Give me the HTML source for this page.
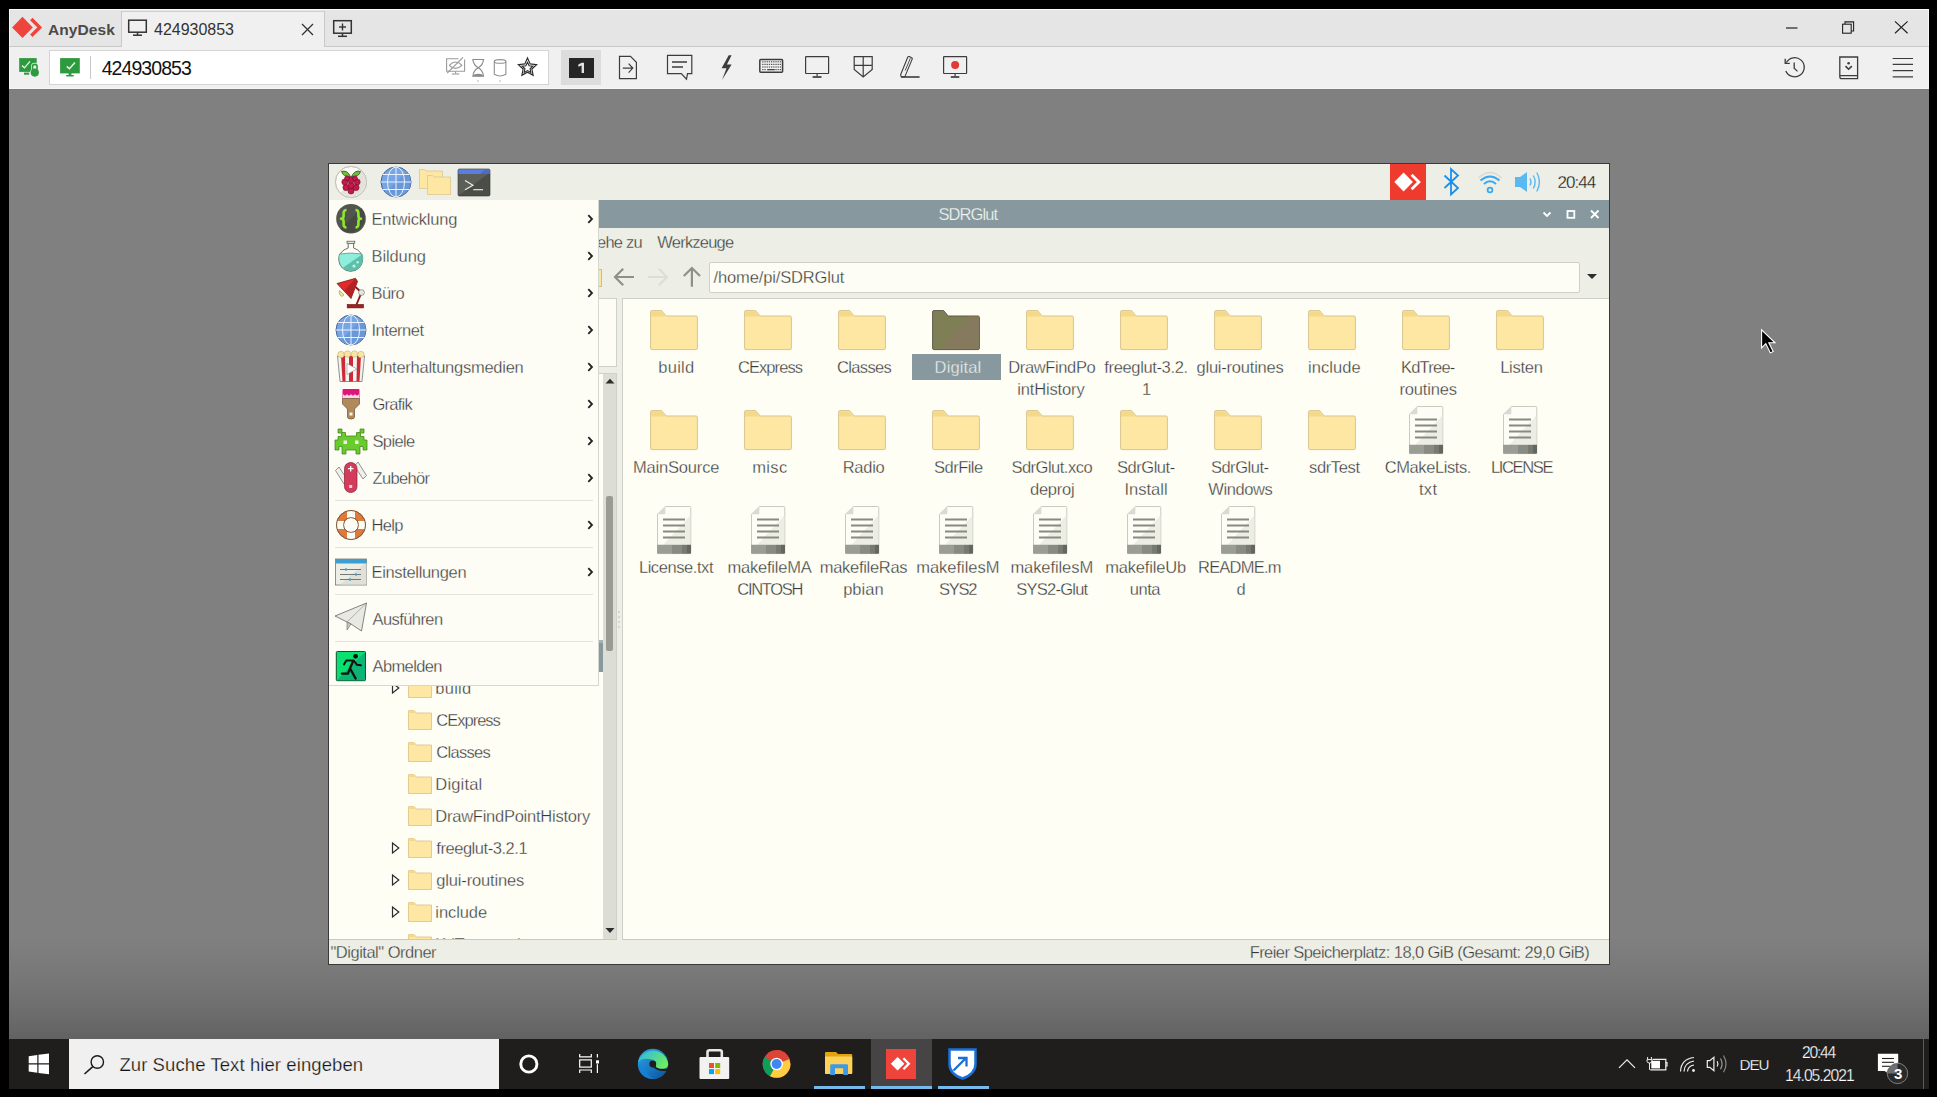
<!DOCTYPE html>
<html><head><meta charset="utf-8">
<style>
*{margin:0;padding:0;box-sizing:border-box}
html,body{width:1937px;height:1097px;overflow:hidden;background:#000;font-family:"Liberation Sans",sans-serif}
.abs{position:absolute}
svg{position:absolute;overflow:visible}
.t{position:absolute;white-space:nowrap;line-height:1}
</style></head><body>

<div class="abs" style="left:9px;top:9px;width:1920px;height:38px;background:#e5e5e5;border-top:1px solid #fafafa"></div>
<div class="abs" style="left:9px;top:9px;width:1px;height:1030px;background:#f4f4f4"></div>
<div class="abs" style="left:1928px;top:9px;width:1px;height:80px;background:#f4f4f4"></div>
<div class="abs" style="left:9px;top:46px;width:1920px;height:1px;background:#c9c9c9"></div>
<div class="abs" style="left:121px;top:11px;width:1px;height:36px;background:#c9c9c9"></div>
<div class="abs" style="left:122px;top:11px;width:203px;height:37px;background:#f0f0f0;border-top:1px solid #cfcfcf;border-right:1px solid #c9c9c9"></div>
<div class="abs" style="left:10px;top:47px;width:1918px;height:42px;background:#f0f0f0;border-bottom:1px solid #f6f6f6"></div>
<div class="abs" style="left:122px;top:46px;width:202px;height:2px;background:#f0f0f0"></div>
<svg style="left:0;top:0" width="60" height="50"><polygon points="22.5,16.8 32.8,27.4 22.5,38 12.1,27.4" fill="#ef443b"/><polyline points="31.3,19 39.7,27.4 31.3,35.8" fill="none" stroke="#ef443b" stroke-width="3.4" stroke-linecap="butt" stroke-linejoin="miter"/></svg>
<div class="t" style="left:48.00px;top:22.00px;font-size:15.5px;font-weight:bold;letter-spacing:0.089px;color:#4a4a4a;">AnyDesk</div>
<svg style="left:0;top:0" width="400" height="50"><rect x="128.7" y="20.2" width="17.6" height="12" fill="none" stroke="#333" stroke-width="1.5"/><line x1="137.5" y1="32" x2="137.5" y2="35" stroke="#333" stroke-width="1.5"/><line x1="133" y1="35.2" x2="142" y2="35.2" stroke="#333" stroke-width="1.5"/><path d="M302 24 L313 35 M313 24 L302 35" stroke="#333" stroke-width="1.3"/><rect x="333.7" y="20.7" width="17.6" height="12.5" fill="none" stroke="#333" stroke-width="1.5"/><line x1="342.5" y1="23.5" x2="342.5" y2="30.5" stroke="#333" stroke-width="1.4"/><line x1="339" y1="27" x2="346" y2="27" stroke="#333" stroke-width="1.4"/><line x1="342.5" y1="33" x2="342.5" y2="36" stroke="#333" stroke-width="1.5"/><line x1="338" y1="36.3" x2="347" y2="36.3" stroke="#333" stroke-width="1.5"/></svg>
<div class="t" style="left:154.00px;top:22.00px;font-size:16px;font-weight:normal;letter-spacing:-0.023px;color:#333;">424930853</div>
<svg style="left:0;top:0" width="1937" height="50"><line x1="1786" y1="28" x2="1797.5" y2="28" stroke="#222" stroke-width="1.2"/><rect x="1842.6" y="24.2" width="8.6" height="9" fill="none" stroke="#222" stroke-width="1.1"/><path d="M1845 24 V21.9 H1853.6 V31 H1851.3" fill="none" stroke="#222" stroke-width="1.1"/><path d="M1895 21.4 L1907.6 33.2 M1907.6 21.4 L1895 33.2" stroke="#222" stroke-width="1.2"/></svg>
<div class="abs" style="left:49px;top:50px;width:500px;height:35px;background:#fff;border:1px solid #d4d4d4"></div>
<div class="abs" style="left:90px;top:56px;width:1px;height:23px;background:#c8c8c8"></div>
<div class="t" style="left:101.70px;top:59.00px;font-size:19.5px;font-weight:normal;letter-spacing:-0.932px;color:#111;">424930853</div>
<svg style="left:0;top:0" width="600" height="90"><rect x="19.2" y="58.1" width="17.5" height="13.8" fill="#2e9a3e"/><rect x="24" y="72.6" width="5.2" height="2.1" fill="#2e9a3e"/><path d="M22 65.6 L24.4 67.8 L30 61.3" fill="none" stroke="#e8f4e8" stroke-width="1.3"/><g fill="#f0f0f0" stroke="#f0f0f0" stroke-width="1.4"><path d="M31.7 69.5 V66.6 A3.1 3.1 0 0 1 37.9 66.6 V69.5 Z"/><circle cx="34.8" cy="72.6" r="4.1"/></g><path d="M32.5 69.5 V66.7 A2.3 2.3 0 0 1 37.1 66.7 V69.5" fill="none" stroke="#2e9a3e" stroke-width="1.6"/><circle cx="34.8" cy="72.6" r="4.1" fill="#2e9a3e"/><rect x="60.1" y="58.1" width="19.7" height="15.3" fill="#2e9a3e"/><rect x="66" y="75" width="7.9" height="1.4" rx="0.7" fill="#2e9a3e"/><rect x="68.6" y="73" width="2.8" height="2.2" fill="#2e9a3e"/><path d="M66.8 66.4 L69.4 68.7 L75 62.4" fill="none" stroke="#e8f4e8" stroke-width="1.5"/></svg>
<svg style="left:0;top:0" width="600" height="90"><g fill="none" stroke="#9a9a9a" stroke-width="1.1"><path d="M458.5 58.7 H446.6 V71.2 H464.6 V59.6"/><line x1="455.6" y1="71.5" x2="455.6" y2="73.4"/><line x1="452" y1="74" x2="459.3" y2="74"/><path d="M449.2 65.3 Q455.6 58.8 461.9 65.3 Q455.6 71.5 449.2 65.3"/><line x1="447.2" y1="73.2" x2="463" y2="57.4" stroke-width="1.2"/></g><g fill="none" stroke="#8a8a8a" stroke-width="1.1"><path d="M472.3 59.5 H484.1 M472.3 76.3 H484.1 M472.8 59.6 Q473.5 65 478.2 67.8 Q483 65 483.5 59.6 M472.8 76.2 Q473.5 70.5 478.2 67.8 Q483 70.5 483.5 76.2"/></g><path d="M472.8 76.2 Q474 73.8 478.2 73.8 Q482.4 73.8 483.5 76.2Z" fill="#8a8a8a"/><g fill="none" stroke="#8f8f8f" stroke-width="1.1"><ellipse cx="500.1" cy="61.4" rx="5.8" ry="1.8"/><path d="M494.3 61.4 V74.3 Q500.1 77.6 505.9 74.3 V61.4"/></g><circle cx="478" cy="81" r="0.9" fill="#b7cdf0"/><circle cx="500" cy="81" r="0.9" fill="#b7cdf0"/><polygon points="527.50,58.00 530.20,63.88 536.63,64.63 531.87,69.02 533.14,75.37 527.50,72.20 521.86,75.37 523.13,69.02 518.37,64.63 524.80,63.88" fill="none" stroke="#2a2a2a" stroke-width="1.15" stroke-linejoin="miter"/><polygon points="527.50,62.30 529.09,65.72 532.83,66.17 530.07,68.73 530.79,72.43 527.50,70.60 524.21,72.43 524.93,68.73 522.17,66.17 525.91,65.72" fill="none" stroke="#2a2a2a" stroke-width="1.1"/></svg>
<div class="abs" style="left:561px;top:50px;width:40px;height:35px;background:#dcdcdc"></div>
<div class="abs" style="left:569px;top:57.5px;width:25px;height:20px;background:#262626"></div>
<svg style="left:0;top:0" width="700" height="90"><path d="M581.6 62.7 H584 V73 H581.6 V65.6 L578.3 66.8 V64.6 Z" fill="#e2e2e2"/></svg>
<svg style="left:0;top:0" width="1937" height="90"><g fill="none" stroke="#3c3c3c" stroke-width="1.2"><path d="M619.5 56.3 H630.5 L636.4 62.3 V78.6 H619.5 Z"/><path d="M622.8 68.1 H632.6 M628.6 63.6 L632.8 68.1 L628.6 72.6"/><path d="M667.5 55.4 H691.8 V73.6 H687.5 L686.5 79.2 L681.3 73.6 H667.5 Z"/><path d="M672 62 H687 M672 67 H683" stroke-width="1.5"/><rect x="759.8" y="59.5" width="22.8" height="12.8" rx="1" stroke-width="1.5"/><rect x="805.6" y="56.6" width="23" height="16.9" rx="0.5"/><path d="M817.1 73.5 V76.3"/><path d="M812.6 77 H821.5" stroke-width="1.7"/><path d="M854.2 56.7 H872.2 V69.4 L863.2 76.9 L854.2 69.4 Z M863.2 56.7 V76.9 M854.2 65.4 H872.2"/><path d="M900.6 74.8 L907.7 57.2 Q908.2 56.2 909.2 56.6 L911.7 57.7 Q912.6 58.1 912.2 59.1 L904.9 76.6 L901.3 77 Z" stroke-width="1.1"/><path d="M905.2 70.5 L910.4 58.2" stroke-width="0.9"/><path d="M901.2 77 H919.6" stroke-width="1.6"/><rect x="943.6" y="56.6" width="23" height="16.9" rx="0.5"/><path d="M955.1 73.5 V76.3"/><path d="M950.8 77 H959.3" stroke-width="1.7"/></g><path d="M728.7 55.2 L721.6 68.3 L726.5 68.3 L722 79.9 L731.6 64.5 L726.9 64.5 L731.6 55.2 Z" fill="#3c3c3c"/><circle cx="955.1" cy="65" r="4" fill="#e23a35"/></svg>
<svg style="left:0;top:0" width="1937" height="90"><rect x="762.2" y="61.2" width="1.3" height="1.2" fill="#555"/><rect x="764.4" y="61.2" width="1.3" height="1.2" fill="#555"/><rect x="766.6" y="61.2" width="1.3" height="1.2" fill="#555"/><rect x="768.8" y="61.2" width="1.3" height="1.2" fill="#555"/><rect x="771.0" y="61.2" width="1.3" height="1.2" fill="#555"/><rect x="773.2" y="61.2" width="1.3" height="1.2" fill="#555"/><rect x="775.4" y="61.2" width="1.3" height="1.2" fill="#555"/><rect x="777.6" y="61.2" width="1.3" height="1.2" fill="#555"/><rect x="779.8" y="61.2" width="1.3" height="1.2" fill="#555"/><rect x="762.2" y="63.8" width="1.3" height="1.2" fill="#555"/><rect x="764.4" y="63.8" width="1.3" height="1.2" fill="#555"/><rect x="766.6" y="63.8" width="1.3" height="1.2" fill="#555"/><rect x="768.8" y="63.8" width="1.3" height="1.2" fill="#555"/><rect x="771.0" y="63.8" width="1.3" height="1.2" fill="#555"/><rect x="773.2" y="63.8" width="1.3" height="1.2" fill="#555"/><rect x="775.4" y="63.8" width="1.3" height="1.2" fill="#555"/><rect x="777.6" y="63.8" width="1.3" height="1.2" fill="#555"/><rect x="779.8" y="63.8" width="1.3" height="1.2" fill="#555"/><rect x="762.2" y="66.4" width="1.3" height="1.2" fill="#555"/><rect x="764.4" y="66.4" width="1.3" height="1.2" fill="#555"/><rect x="766.6" y="66.4" width="1.3" height="1.2" fill="#555"/><rect x="768.8" y="66.4" width="1.3" height="1.2" fill="#555"/><rect x="771.0" y="66.4" width="1.3" height="1.2" fill="#555"/><rect x="773.2" y="66.4" width="1.3" height="1.2" fill="#555"/><rect x="775.4" y="66.4" width="1.3" height="1.2" fill="#555"/><rect x="777.6" y="66.4" width="1.3" height="1.2" fill="#555"/><rect x="779.8" y="66.4" width="1.3" height="1.2" fill="#555"/><rect x="762.2" y="69.0" width="1.3" height="1.2" fill="#555"/><rect x="764.4" y="69.0" width="1.3" height="1.2" fill="#555"/><rect x="775.4" y="69.0" width="1.3" height="1.2" fill="#555"/><rect x="777.6" y="69.0" width="1.3" height="1.2" fill="#555"/><rect x="779.8" y="69.0" width="1.3" height="1.2" fill="#555"/><rect x="767.2" y="69" width="7.6" height="1.3" fill="#444"/></svg>
<svg style="left:0;top:0" width="1937" height="90"><g fill="none" stroke="#3c3c3c" stroke-width="1.3"><path d="M1786.3 62.5 A9.6 9.6 0 1 1 1785.8 71"/><path d="M1785.2 58.8 V63.4 H1789.8" /><path d="M1794.2 62.6 V68.2 L1797.5 71.4"/><path d="M1839.8 57 H1857.6 V78.7 H1841.7 Q1839.8 78.7 1839.8 76.8 Z M1839.8 75.6 H1857.6"/><path d="M1845.5 66.1 L1848.6 69.2 L1851.8 66.1" stroke-width="1.6"/><path d="M1892.7 58.5 H1913 M1892.7 64.3 H1913 M1892.7 70.6 H1913 M1892.7 76.8 H1913" stroke-width="1.2"/></g><circle cx="1848.6" cy="63.2" r="1.3" fill="#3c3c3c"/></svg>
<div class="abs" style="left:9px;top:89px;width:1920px;height:950px;background:linear-gradient(to bottom,#787878 0px,#808080 1px,#808080 848px,#777 890px,#6c6c6c 925px,#626262 950px)"></div>
<div class="abs" style="left:328px;top:163px;width:1282px;height:802px;background:#3a3a3a"></div>
<div class="abs" style="left:329px;top:164px;width:1280px;height:36px;background:#edeee6"></div>
<svg style="left:0;top:0" width="1937" height="210"><circle cx="351" cy="182" r="15.6" fill="#fbfbf4" stroke="#c9c9c1" stroke-width="1"/><path d="M362 171 A15.6 15.6 0 0 1 340 193 Z" fill="#e3e3da"/><circle cx="351" cy="182" r="15.6" fill="none" stroke="#c4c4bc" stroke-width="0.9"/><path d="M350.5 176.5 Q347 169.5 341.5 171.5 Q343 177 350.5 176.5Z M351.5 176.5 Q355 169.5 360.5 171.5 Q359 177 351.5 176.5Z" fill="#6cbf3a" stroke="#1f3d14" stroke-width="0.7"/><g fill="#c8174a" stroke="#6a0c26" stroke-width="0.6"><circle cx="351" cy="191" r="3"/><circle cx="346" cy="187.5" r="3.1"/><circle cx="356" cy="187.5" r="3.1"/><circle cx="351" cy="185.5" r="3.1"/><circle cx="344.8" cy="182" r="3"/><circle cx="357.2" cy="182" r="3"/><circle cx="351" cy="180" r="3.2"/><circle cx="347" cy="178.3" r="2.4"/><circle cx="355" cy="178.3" r="2.4"/></g><circle cx="396" cy="182" r="15" fill="#78a6e4" stroke="#3c5a90" stroke-width="0.9"/><path d="M385.4 192.6 A15 15 0 0 0 406.6 171.4 Z" fill="#6a97d6"/><g fill="none" stroke="#eaf2ff" stroke-width="1"><line x1="396" y1="167" x2="396" y2="197"/><line x1="381" y1="182" x2="411" y2="182"/><line x1="383" y1="174.5" x2="409" y2="174.5"/><line x1="383" y1="189.5" x2="409" y2="189.5"/><ellipse cx="396" cy="182" rx="8.5" ry="15"/></g><path d="M419.5 169.5 H424.5 L426 171 H442.5 V188.5 H419.5 Z" fill="#fde7a2" stroke="#dcc68e" stroke-width="0.8"/><path d="M427.5 175.5 H432.5 L434 177 H450.5 V194.5 H427.5 Z" fill="#fde7a2" stroke="#dcc68e" stroke-width="0.8"/><rect x="458" y="169" width="32" height="27" rx="1.5" fill="#4b4d48" stroke="#2e302c" stroke-width="0.6"/><path d="M458.3 195.7 L488 174 H458.3 Z" fill="#5c5e58"/><path d="M458.3 174 H489.7 V170.5 Q489.7 169.3 488.5 169.3 H459.5 Q458.3 169.3 458.3 170.5 Z" fill="#5a7ee0"/><path d="M485 169.3 L480 174 H489.7 V170.5 Q489.7 169.3 488.5 169.3Z" fill="#4a6cc8"/><path d="M465 180.5 L473 185.2 L465 189.8" fill="none" stroke="#f0f0ea" stroke-width="1.1"/><line x1="473.3" y1="189.7" x2="483" y2="189.7" stroke="#f0f0ea" stroke-width="1.1"/></svg>
<div class="abs" style="left:1390px;top:164px;width:36px;height:36px;background:#ef3b2d"></div>
<svg style="left:0;top:0" width="1937" height="210"><polygon points="1403.6,172.6 1412.9,182 1403.6,191.4 1394.3,182" fill="#fff"/><polyline points="1411.6,174.8 1418.9,182 1411.6,189.2" fill="none" stroke="#fff" stroke-width="2.8"/><path d="M1444.5 175.5 L1458 188 L1451 194.5 V169 L1458 175.5 L1444.5 188" fill="none" stroke="#1a8fea" stroke-width="1.8"/><path d="M1478.5 178 Q1490 167 1501.5 178" fill="none" stroke="#d8d8d0" stroke-width="1.2"/><path d="M1480.5 180.5 Q1490 172.5 1499.5 180.5" fill="none" stroke="#3aa8f0" stroke-width="2"/><path d="M1484 184 Q1490 178.5 1496 184" fill="none" stroke="#3aa8f0" stroke-width="2"/><circle cx="1490" cy="190" r="2.4" fill="none" stroke="#3aa8f0" stroke-width="1.8"/><path d="M1515 177 H1520 L1527 172 V192 L1520 187 H1515 Z" fill="#5ab9f2"/><g fill="none" stroke="#5ab9f2" stroke-width="1.4"><path d="M1530 178.5 Q1532 182 1530 185.5"/><path d="M1533.3 175.5 Q1537 182 1533.3 188.5"/><path d="M1536.8 172.5 Q1542 182 1536.8 191.5"/></g></svg>
<div class="t" style="left:1557.50px;top:174.00px;font-size:17px;font-weight:normal;letter-spacing:-0.947px;color:#111;-webkit-text-stroke:0.3px #edeee6;">20:44</div>
<div class="abs" style="left:329px;top:200px;width:1280px;height:764px;background:#edefe6"></div>
<div class="abs" style="left:329px;top:200px;width:1280px;height:28px;background:#87999f"></div>
<div class="t" style="left:938.50px;top:206.00px;font-size:16.5px;font-weight:normal;letter-spacing:-0.919px;color:#f4f6f2;-webkit-text-stroke:0.25px #87999f;">SDRGlut</div>
<svg style="left:0;top:0" width="1937" height="230"><path d="M1543.5 212.5 L1547 216 L1550.5 212.5" fill="none" stroke="#fff" stroke-width="1.8"/><rect x="1567.5" y="211" width="6.8" height="6.8" fill="none" stroke="#fff" stroke-width="1.8"/><path d="M1591 210.5 L1598.5 218 M1598.5 210.5 L1591 218" stroke="#fff" stroke-width="1.9"/></svg>
<div class="t" style="left:585.00px;top:234.00px;font-size:16.5px;font-weight:normal;letter-spacing:-0.783px;color:#383838;-webkit-text-stroke:0.3px #edefe6;">Gehe zu</div>
<div class="t" style="left:657.30px;top:234.00px;font-size:16.5px;font-weight:normal;letter-spacing:-0.785px;color:#383838;-webkit-text-stroke:0.3px #edefe6;">Werkzeuge</div>
<svg style="left:0;top:0" width="1937" height="300"><g fill="none" stroke-width="2.2"><path d="M615 277 H634 M623.2 268.8 L615 277 L623.2 285.2" stroke="#8d9189"/><path d="M648 277 H667 M658.8 268.8 L667 277 L658.8 285.2" stroke="#dcdfd6"/><path d="M691.9 268 V286.7 M683.8 276 L691.9 268 L700 276" stroke="#8d9189"/></g><polygon points="1587,274 1597,274 1592,279" fill="#2d2d2d"/></svg>
<div class="abs" style="left:709px;top:261.5px;width:871px;height:31px;background:#fdfdf6;border:1px solid #cfcfc8;border-radius:2px"></div>
<div class="t" style="left:713.60px;top:269.00px;font-size:16.5px;font-weight:normal;letter-spacing:-0.146px;color:#383838;-webkit-text-stroke:0.3px #fdfdf6;">/home/pi/SDRGlut</div>
<div class="abs" style="left:329px;top:298px;width:288px;height:69px;background:#fdfdf6;border:1px solid #cfd1c8"></div>
<div class="abs" style="left:598px;top:269px;width:4px;height:18px;background:#fde59a;border:1px solid #cdbb8f;border-left:none"></div>
<div class="abs" style="left:329px;top:373px;width:288px;height:567px;background:#fefef5;border-top:1px solid #cfd1c8;border-right:1px solid #cfd1c8;border-bottom:1px solid #c8cac1"></div>
<div class="abs" style="left:603px;top:374px;width:13px;height:565px;background:#dcddd5"></div>
<div class="abs" style="left:605.8px;top:495.7px;width:7.1px;height:155.6px;background:#9a9c92;border-radius:2px"></div>
<svg style="left:0;top:0" width="1937" height="960"><polygon points="605.5,383.5 614.5,383.5 610,378.8" fill="#2d2d2d"/><polygon points="605.5,928 614.5,928 610,933" fill="#2d2d2d"/><g fill="#b9bbb3"><circle cx="619" cy="612" r="0.8"/><circle cx="619" cy="617" r="0.8"/><circle cx="619" cy="622" r="0.8"/><circle cx="619" cy="627" r="0.8"/></g></svg>
<div class="abs" style="left:330px;top:374px;width:273px;height:565px;overflow:hidden">
<div class="abs" style="left:0px;top:266px;width:273px;height:32px;background:#87999f;border-top:3px solid #a3b3b8"></div>
<svg style="left:0;top:0" width="300" height="600"><polygon points="62.5,309 68.80000000000001,314 62.5,319" fill="none" stroke="#2d2d2d" stroke-width="1.2"/></svg>
<svg style="left:78px;top:304px" width="24" height="20"><path d="M0.5 0.5 H6 L8.5 3 H23.5 V19.5 H0.5 Z" fill="#fde7a2" stroke="#dcc68e" stroke-width="0.9"/><path d="M0.5 0.5 H6 L8.5 3 H0.5 Z" fill="#f5d98a"/></svg>
<div class="t" style="left:105.30px;top:306.00px;font-size:16.5px;font-weight:normal;letter-spacing:0.254px;color:#383838;-webkit-text-stroke:0.3px #fefef5;">build</div>
<svg style="left:78px;top:336px" width="24" height="20"><path d="M0.5 0.5 H6 L8.5 3 H23.5 V19.5 H0.5 Z" fill="#fde7a2" stroke="#dcc68e" stroke-width="0.9"/><path d="M0.5 0.5 H6 L8.5 3 H0.5 Z" fill="#f5d98a"/></svg>
<div class="t" style="left:106.30px;top:338.00px;font-size:16.5px;font-weight:normal;letter-spacing:-0.996px;color:#383838;-webkit-text-stroke:0.3px #fefef5;">CExpress</div>
<svg style="left:78px;top:368px" width="24" height="20"><path d="M0.5 0.5 H6 L8.5 3 H23.5 V19.5 H0.5 Z" fill="#fde7a2" stroke="#dcc68e" stroke-width="0.9"/><path d="M0.5 0.5 H6 L8.5 3 H0.5 Z" fill="#f5d98a"/></svg>
<div class="t" style="left:106.30px;top:370.00px;font-size:16.5px;font-weight:normal;letter-spacing:-0.706px;color:#383838;-webkit-text-stroke:0.3px #fefef5;">Classes</div>
<svg style="left:78px;top:400px" width="24" height="20"><path d="M0.5 0.5 H6 L8.5 3 H23.5 V19.5 H0.5 Z" fill="#fde7a2" stroke="#dcc68e" stroke-width="0.9"/><path d="M0.5 0.5 H6 L8.5 3 H0.5 Z" fill="#f5d98a"/></svg>
<div class="t" style="left:105.30px;top:402.00px;font-size:16.5px;font-weight:normal;letter-spacing:0.169px;color:#383838;-webkit-text-stroke:0.3px #fefef5;">Digital</div>
<svg style="left:78px;top:432px" width="24" height="20"><path d="M0.5 0.5 H6 L8.5 3 H23.5 V19.5 H0.5 Z" fill="#fde7a2" stroke="#dcc68e" stroke-width="0.9"/><path d="M0.5 0.5 H6 L8.5 3 H0.5 Z" fill="#f5d98a"/></svg>
<div class="t" style="left:105.30px;top:434.00px;font-size:16.5px;font-weight:normal;letter-spacing:-0.247px;color:#383838;-webkit-text-stroke:0.3px #fefef5;">DrawFindPointHistory</div>
<svg style="left:0;top:0" width="300" height="600"><polygon points="62.5,469 68.80000000000001,474 62.5,479" fill="none" stroke="#2d2d2d" stroke-width="1.2"/></svg>
<svg style="left:78px;top:464px" width="24" height="20"><path d="M0.5 0.5 H6 L8.5 3 H23.5 V19.5 H0.5 Z" fill="#fde7a2" stroke="#dcc68e" stroke-width="0.9"/><path d="M0.5 0.5 H6 L8.5 3 H0.5 Z" fill="#f5d98a"/></svg>
<div class="t" style="left:106.30px;top:466.00px;font-size:16.5px;font-weight:normal;letter-spacing:-0.458px;color:#383838;-webkit-text-stroke:0.3px #fefef5;">freeglut-3.2.1</div>
<svg style="left:0;top:0" width="300" height="600"><polygon points="62.5,501 68.80000000000001,506 62.5,511" fill="none" stroke="#2d2d2d" stroke-width="1.2"/></svg>
<svg style="left:78px;top:496px" width="24" height="20"><path d="M0.5 0.5 H6 L8.5 3 H23.5 V19.5 H0.5 Z" fill="#fde7a2" stroke="#dcc68e" stroke-width="0.9"/><path d="M0.5 0.5 H6 L8.5 3 H0.5 Z" fill="#f5d98a"/></svg>
<div class="t" style="left:106.30px;top:498.00px;font-size:16.5px;font-weight:normal;letter-spacing:-0.169px;color:#383838;-webkit-text-stroke:0.3px #fefef5;">glui-routines</div>
<svg style="left:0;top:0" width="300" height="600"><polygon points="62.5,533 68.80000000000001,538 62.5,543" fill="none" stroke="#2d2d2d" stroke-width="1.2"/></svg>
<svg style="left:78px;top:528px" width="24" height="20"><path d="M0.5 0.5 H6 L8.5 3 H23.5 V19.5 H0.5 Z" fill="#fde7a2" stroke="#dcc68e" stroke-width="0.9"/><path d="M0.5 0.5 H6 L8.5 3 H0.5 Z" fill="#f5d98a"/></svg>
<div class="t" style="left:105.30px;top:530.00px;font-size:16.5px;font-weight:normal;letter-spacing:-0.085px;color:#383838;-webkit-text-stroke:0.3px #fefef5;">include</div>
<svg style="left:78px;top:560px" width="24" height="20"><path d="M0.5 0.5 H6 L8.5 3 H23.5 V19.5 H0.5 Z" fill="#fde7a2" stroke="#dcc68e" stroke-width="0.9"/><path d="M0.5 0.5 H6 L8.5 3 H0.5 Z" fill="#f5d98a"/></svg>
<div class="t" style="left:105.30px;top:562.00px;font-size:16.5px;font-weight:normal;letter-spacing:-0.524px;color:#383838;-webkit-text-stroke:0.3px #fefef5;">KdTree-routines</div>
</div>
<div class="abs" style="left:622px;top:298px;width:987px;height:642px;background:#fefef5;border-top:1px solid #cfd1c8;border-left:1px solid #cfd1c8;border-bottom:1px solid #c8cac1"></div>
<svg style="left:650px;top:310px" width="48" height="41"><path d="M0.6 2 Q0.6 0.6 2 0.6 H11.6 L16.2 6 H46 Q47.4 6 47.4 7.4 V38.2 Q47.4 39.6 46 39.6 H2 Q0.6 39.6 0.6 38.2 Z" fill="#fde7a2" stroke="#d9c58f" stroke-width="1"/><path d="M1.2 2 Q1.2 1.2 2 1.2 H11.3 L15.6 6.4 H1.2 Z" fill="#f5d98a"/></svg>
<div class="t" style="left:658.30px;top:359.00px;font-size:16.5px;font-weight:normal;letter-spacing:0.254px;color:#383838;-webkit-text-stroke:0.3px #fefef5;">build</div>
<svg style="left:744px;top:310px" width="48" height="41"><path d="M0.6 2 Q0.6 0.6 2 0.6 H11.6 L16.2 6 H46 Q47.4 6 47.4 7.4 V38.2 Q47.4 39.6 46 39.6 H2 Q0.6 39.6 0.6 38.2 Z" fill="#fde7a2" stroke="#d9c58f" stroke-width="1"/><path d="M1.2 2 Q1.2 1.2 2 1.2 H11.3 L15.6 6.4 H1.2 Z" fill="#f5d98a"/></svg>
<div class="t" style="left:737.90px;top:359.00px;font-size:16.5px;font-weight:normal;letter-spacing:-0.910px;color:#383838;-webkit-text-stroke:0.3px #fefef5;">CExpress</div>
<svg style="left:838px;top:310px" width="48" height="41"><path d="M0.6 2 Q0.6 0.6 2 0.6 H11.6 L16.2 6 H46 Q47.4 6 47.4 7.4 V38.2 Q47.4 39.6 46 39.6 H2 Q0.6 39.6 0.6 38.2 Z" fill="#fde7a2" stroke="#d9c58f" stroke-width="1"/><path d="M1.2 2 Q1.2 1.2 2 1.2 H11.3 L15.6 6.4 H1.2 Z" fill="#f5d98a"/></svg>
<div class="t" style="left:837.00px;top:359.00px;font-size:16.5px;font-weight:normal;letter-spacing:-0.639px;color:#383838;-webkit-text-stroke:0.3px #fefef5;">Classes</div>
<svg style="left:932px;top:310px" width="48" height="41"><path d="M0.6 2 Q0.6 0.6 2 0.6 H11.6 L16.2 6 H46 Q47.4 6 47.4 7.4 V38.2 Q47.4 39.6 46 39.6 H2 Q0.6 39.6 0.6 38.2 Z" fill="#7f7f56" stroke="#5f5b48" stroke-width="1"/><path d="M1.2 2 Q1.2 1.2 2 1.2 H11.3 L15.6 6.4 H1.2 Z" fill="#7f7f56"/><path d="M47 6.5 V38.2 Q47 39.1 46 39.1 H8 L36 6.5Z" fill="#857a5d"/></svg>
<div class="abs" style="left:912px;top:354px;width:89px;height:26px;background:#87999f"></div>
<div class="t" style="left:934.60px;top:359.00px;font-size:16.5px;font-weight:normal;letter-spacing:0.136px;color:#f0f0ea;-webkit-text-stroke:0.3px #87999f;">Digital</div>
<svg style="left:1026px;top:310px" width="48" height="41"><path d="M0.6 2 Q0.6 0.6 2 0.6 H11.6 L16.2 6 H46 Q47.4 6 47.4 7.4 V38.2 Q47.4 39.6 46 39.6 H2 Q0.6 39.6 0.6 38.2 Z" fill="#fde7a2" stroke="#d9c58f" stroke-width="1"/><path d="M1.2 2 Q1.2 1.2 2 1.2 H11.3 L15.6 6.4 H1.2 Z" fill="#f5d98a"/></svg>
<div class="t" style="left:1008.20px;top:359.00px;font-size:16.5px;font-weight:normal;letter-spacing:-0.356px;color:#383838;-webkit-text-stroke:0.3px #fefef5;">DrawFindPo</div>
<div class="t" style="left:1017.20px;top:381.00px;font-size:16.5px;font-weight:normal;letter-spacing:-0.146px;color:#383838;-webkit-text-stroke:0.3px #fefef5;">intHistory</div>
<svg style="left:1120px;top:310px" width="48" height="41"><path d="M0.6 2 Q0.6 0.6 2 0.6 H11.6 L16.2 6 H46 Q47.4 6 47.4 7.4 V38.2 Q47.4 39.6 46 39.6 H2 Q0.6 39.6 0.6 38.2 Z" fill="#fde7a2" stroke="#d9c58f" stroke-width="1"/><path d="M1.2 2 Q1.2 1.2 2 1.2 H11.3 L15.6 6.4 H1.2 Z" fill="#f5d98a"/></svg>
<div class="t" style="left:1104.30px;top:359.00px;font-size:16.5px;font-weight:normal;letter-spacing:-0.356px;color:#383838;-webkit-text-stroke:0.3px #fefef5;">freeglut-3.2.</div>
<div class="t" style="left:1142.00px;top:381.00px;font-size:16.5px;font-weight:normal;letter-spacing:0.000px;color:#383838;-webkit-text-stroke:0.3px #fefef5;">1</div>
<svg style="left:1214px;top:310px" width="48" height="41"><path d="M0.6 2 Q0.6 0.6 2 0.6 H11.6 L16.2 6 H46 Q47.4 6 47.4 7.4 V38.2 Q47.4 39.6 46 39.6 H2 Q0.6 39.6 0.6 38.2 Z" fill="#fde7a2" stroke="#d9c58f" stroke-width="1"/><path d="M1.2 2 Q1.2 1.2 2 1.2 H11.3 L15.6 6.4 H1.2 Z" fill="#f5d98a"/></svg>
<div class="t" style="left:1196.50px;top:359.00px;font-size:16.5px;font-weight:normal;letter-spacing:-0.219px;color:#383838;-webkit-text-stroke:0.3px #fefef5;">glui-routines</div>
<svg style="left:1308px;top:310px" width="48" height="41"><path d="M0.6 2 Q0.6 0.6 2 0.6 H11.6 L16.2 6 H46 Q47.4 6 47.4 7.4 V38.2 Q47.4 39.6 46 39.6 H2 Q0.6 39.6 0.6 38.2 Z" fill="#fde7a2" stroke="#d9c58f" stroke-width="1"/><path d="M1.2 2 Q1.2 1.2 2 1.2 H11.3 L15.6 6.4 H1.2 Z" fill="#f5d98a"/></svg>
<div class="t" style="left:1308.10px;top:359.00px;font-size:16.5px;font-weight:normal;letter-spacing:0.031px;color:#383838;-webkit-text-stroke:0.3px #fefef5;">include</div>
<svg style="left:1402px;top:310px" width="48" height="41"><path d="M0.6 2 Q0.6 0.6 2 0.6 H11.6 L16.2 6 H46 Q47.4 6 47.4 7.4 V38.2 Q47.4 39.6 46 39.6 H2 Q0.6 39.6 0.6 38.2 Z" fill="#fde7a2" stroke="#d9c58f" stroke-width="1"/><path d="M1.2 2 Q1.2 1.2 2 1.2 H11.3 L15.6 6.4 H1.2 Z" fill="#f5d98a"/></svg>
<div class="t" style="left:1401.00px;top:359.00px;font-size:16.5px;font-weight:normal;letter-spacing:-0.783px;color:#383838;-webkit-text-stroke:0.3px #fefef5;">KdTree-</div>
<div class="t" style="left:1399.40px;top:381.00px;font-size:16.5px;font-weight:normal;letter-spacing:-0.164px;color:#383838;-webkit-text-stroke:0.3px #fefef5;">routines</div>
<svg style="left:1496px;top:310px" width="48" height="41"><path d="M0.6 2 Q0.6 0.6 2 0.6 H11.6 L16.2 6 H46 Q47.4 6 47.4 7.4 V38.2 Q47.4 39.6 46 39.6 H2 Q0.6 39.6 0.6 38.2 Z" fill="#fde7a2" stroke="#d9c58f" stroke-width="1"/><path d="M1.2 2 Q1.2 1.2 2 1.2 H11.3 L15.6 6.4 H1.2 Z" fill="#f5d98a"/></svg>
<div class="t" style="left:1500.20px;top:359.00px;font-size:16.5px;font-weight:normal;letter-spacing:-0.251px;color:#383838;-webkit-text-stroke:0.3px #fefef5;">Listen</div>
<svg style="left:650px;top:410px" width="48" height="41"><path d="M0.6 2 Q0.6 0.6 2 0.6 H11.6 L16.2 6 H46 Q47.4 6 47.4 7.4 V38.2 Q47.4 39.6 46 39.6 H2 Q0.6 39.6 0.6 38.2 Z" fill="#fde7a2" stroke="#d9c58f" stroke-width="1"/><path d="M1.2 2 Q1.2 1.2 2 1.2 H11.3 L15.6 6.4 H1.2 Z" fill="#f5d98a"/></svg>
<div class="t" style="left:633.00px;top:459.00px;font-size:16.5px;font-weight:normal;letter-spacing:-0.185px;color:#383838;-webkit-text-stroke:0.3px #fefef5;">MainSource</div>
<svg style="left:744px;top:410px" width="48" height="41"><path d="M0.6 2 Q0.6 0.6 2 0.6 H11.6 L16.2 6 H46 Q47.4 6 47.4 7.4 V38.2 Q47.4 39.6 46 39.6 H2 Q0.6 39.6 0.6 38.2 Z" fill="#fde7a2" stroke="#d9c58f" stroke-width="1"/><path d="M1.2 2 Q1.2 1.2 2 1.2 H11.3 L15.6 6.4 H1.2 Z" fill="#f5d98a"/></svg>
<div class="t" style="left:752.20px;top:459.00px;font-size:16.5px;font-weight:normal;letter-spacing:0.347px;color:#383838;-webkit-text-stroke:0.3px #fefef5;">misc</div>
<svg style="left:838px;top:410px" width="48" height="41"><path d="M0.6 2 Q0.6 0.6 2 0.6 H11.6 L16.2 6 H46 Q47.4 6 47.4 7.4 V38.2 Q47.4 39.6 46 39.6 H2 Q0.6 39.6 0.6 38.2 Z" fill="#fde7a2" stroke="#d9c58f" stroke-width="1"/><path d="M1.2 2 Q1.2 1.2 2 1.2 H11.3 L15.6 6.4 H1.2 Z" fill="#f5d98a"/></svg>
<div class="t" style="left:842.70px;top:459.00px;font-size:16.5px;font-weight:normal;letter-spacing:-0.259px;color:#383838;-webkit-text-stroke:0.3px #fefef5;">Radio</div>
<svg style="left:932px;top:410px" width="48" height="41"><path d="M0.6 2 Q0.6 0.6 2 0.6 H11.6 L16.2 6 H46 Q47.4 6 47.4 7.4 V38.2 Q47.4 39.6 46 39.6 H2 Q0.6 39.6 0.6 38.2 Z" fill="#fde7a2" stroke="#d9c58f" stroke-width="1"/><path d="M1.2 2 Q1.2 1.2 2 1.2 H11.3 L15.6 6.4 H1.2 Z" fill="#f5d98a"/></svg>
<div class="t" style="left:934.00px;top:459.00px;font-size:16.5px;font-weight:normal;letter-spacing:-0.514px;color:#383838;-webkit-text-stroke:0.3px #fefef5;">SdrFile</div>
<svg style="left:1026px;top:410px" width="48" height="41"><path d="M0.6 2 Q0.6 0.6 2 0.6 H11.6 L16.2 6 H46 Q47.4 6 47.4 7.4 V38.2 Q47.4 39.6 46 39.6 H2 Q0.6 39.6 0.6 38.2 Z" fill="#fde7a2" stroke="#d9c58f" stroke-width="1"/><path d="M1.2 2 Q1.2 1.2 2 1.2 H11.3 L15.6 6.4 H1.2 Z" fill="#f5d98a"/></svg>
<div class="t" style="left:1011.40px;top:459.00px;font-size:16.5px;font-weight:normal;letter-spacing:-0.502px;color:#383838;-webkit-text-stroke:0.3px #fefef5;">SdrGlut.xco</div>
<div class="t" style="left:1030.00px;top:481.00px;font-size:16.5px;font-weight:normal;letter-spacing:-0.260px;color:#383838;-webkit-text-stroke:0.3px #fefef5;">deproj</div>
<svg style="left:1120px;top:410px" width="48" height="41"><path d="M0.6 2 Q0.6 0.6 2 0.6 H11.6 L16.2 6 H46 Q47.4 6 47.4 7.4 V38.2 Q47.4 39.6 46 39.6 H2 Q0.6 39.6 0.6 38.2 Z" fill="#fde7a2" stroke="#d9c58f" stroke-width="1"/><path d="M1.2 2 Q1.2 1.2 2 1.2 H11.3 L15.6 6.4 H1.2 Z" fill="#f5d98a"/></svg>
<div class="t" style="left:1117.00px;top:459.00px;font-size:16.5px;font-weight:normal;letter-spacing:-0.462px;color:#383838;-webkit-text-stroke:0.3px #fefef5;">SdrGlut-</div>
<div class="t" style="left:1124.40px;top:481.00px;font-size:16.5px;font-weight:normal;letter-spacing:0.027px;color:#383838;-webkit-text-stroke:0.3px #fefef5;">Install</div>
<svg style="left:1214px;top:410px" width="48" height="41"><path d="M0.6 2 Q0.6 0.6 2 0.6 H11.6 L16.2 6 H46 Q47.4 6 47.4 7.4 V38.2 Q47.4 39.6 46 39.6 H2 Q0.6 39.6 0.6 38.2 Z" fill="#fde7a2" stroke="#d9c58f" stroke-width="1"/><path d="M1.2 2 Q1.2 1.2 2 1.2 H11.3 L15.6 6.4 H1.2 Z" fill="#f5d98a"/></svg>
<div class="t" style="left:1210.90px;top:459.00px;font-size:16.5px;font-weight:normal;letter-spacing:-0.477px;color:#383838;-webkit-text-stroke:0.3px #fefef5;">SdrGlut-</div>
<div class="t" style="left:1208.30px;top:481.00px;font-size:16.5px;font-weight:normal;letter-spacing:-0.397px;color:#383838;-webkit-text-stroke:0.3px #fefef5;">Windows</div>
<svg style="left:1308px;top:410px" width="48" height="41"><path d="M0.6 2 Q0.6 0.6 2 0.6 H11.6 L16.2 6 H46 Q47.4 6 47.4 7.4 V38.2 Q47.4 39.6 46 39.6 H2 Q0.6 39.6 0.6 38.2 Z" fill="#fde7a2" stroke="#d9c58f" stroke-width="1"/><path d="M1.2 2 Q1.2 1.2 2 1.2 H11.3 L15.6 6.4 H1.2 Z" fill="#f5d98a"/></svg>
<div class="t" style="left:1309.10px;top:459.00px;font-size:16.5px;font-weight:normal;letter-spacing:-0.383px;color:#383838;-webkit-text-stroke:0.3px #fefef5;">sdrTest</div>
<svg style="left:1409px;top:406px" width="36" height="50"><path d="M8.3 0.5 H32.8 Q33.8 0.5 33.8 1.5 V47.6 H0.5 V8.3 Z" fill="#fdfdf6" stroke="#c3c5bb" stroke-width="0.9"/><path d="M33.3 9.5 V39 H6 Z" fill="#eceee4"/><path d="M0.5 8.3 H7.6 Q8.3 8.3 8.3 7.6 V0.5 Z" fill="#d9dbd2"/><g fill="#878a80"><rect x="6" y="12.5" width="22" height="2"/><rect x="6" y="18.5" width="22" height="2"/><rect x="6" y="24.5" width="22" height="2"/><rect x="6" y="30.5" width="22" height="2"/></g><path d="M0.1 38.8 H15 V47.8 H1.3 Q0.1 47.8 0.1 46.6 Z" fill="#9a9d93"/><rect x="15" y="38.8" width="10" height="9" fill="#888b81"/><rect x="25" y="38.8" width="5" height="9" fill="#777a70"/><path d="M30 38.8 H34 V46.6 Q34 47.8 32.8 47.8 H30 Z" fill="#64675d"/></svg>
<div class="t" style="left:1384.70px;top:459.00px;font-size:16.5px;font-weight:normal;letter-spacing:-0.409px;color:#383838;-webkit-text-stroke:0.3px #fefef5;">CMakeLists.</div>
<div class="t" style="left:1418.90px;top:481.00px;font-size:16.5px;font-weight:normal;letter-spacing:0.383px;color:#383838;-webkit-text-stroke:0.3px #fefef5;">txt</div>
<svg style="left:1503px;top:406px" width="36" height="50"><path d="M8.3 0.5 H32.8 Q33.8 0.5 33.8 1.5 V47.6 H0.5 V8.3 Z" fill="#fdfdf6" stroke="#c3c5bb" stroke-width="0.9"/><path d="M33.3 9.5 V39 H6 Z" fill="#eceee4"/><path d="M0.5 8.3 H7.6 Q8.3 8.3 8.3 7.6 V0.5 Z" fill="#d9dbd2"/><g fill="#878a80"><rect x="6" y="12.5" width="22" height="2"/><rect x="6" y="18.5" width="22" height="2"/><rect x="6" y="24.5" width="22" height="2"/><rect x="6" y="30.5" width="22" height="2"/></g><path d="M0.1 38.8 H15 V47.8 H1.3 Q0.1 47.8 0.1 46.6 Z" fill="#9a9d93"/><rect x="15" y="38.8" width="10" height="9" fill="#888b81"/><rect x="25" y="38.8" width="5" height="9" fill="#777a70"/><path d="M30 38.8 H34 V46.6 Q34 47.8 32.8 47.8 H30 Z" fill="#64675d"/></svg>
<div class="t" style="left:1490.90px;top:459.00px;font-size:16.5px;font-weight:normal;letter-spacing:-1.351px;color:#383838;-webkit-text-stroke:0.3px #fefef5;">LICENSE</div>
<svg style="left:657px;top:506px" width="36" height="50"><path d="M8.3 0.5 H32.8 Q33.8 0.5 33.8 1.5 V47.6 H0.5 V8.3 Z" fill="#fdfdf6" stroke="#c3c5bb" stroke-width="0.9"/><path d="M33.3 9.5 V39 H6 Z" fill="#eceee4"/><path d="M0.5 8.3 H7.6 Q8.3 8.3 8.3 7.6 V0.5 Z" fill="#d9dbd2"/><g fill="#878a80"><rect x="6" y="12.5" width="22" height="2"/><rect x="6" y="18.5" width="22" height="2"/><rect x="6" y="24.5" width="22" height="2"/><rect x="6" y="30.5" width="22" height="2"/></g><path d="M0.1 38.8 H15 V47.8 H1.3 Q0.1 47.8 0.1 46.6 Z" fill="#9a9d93"/><rect x="15" y="38.8" width="10" height="9" fill="#888b81"/><rect x="25" y="38.8" width="5" height="9" fill="#777a70"/><path d="M30 38.8 H34 V46.6 Q34 47.8 32.8 47.8 H30 Z" fill="#64675d"/></svg>
<div class="t" style="left:638.90px;top:559.00px;font-size:16.5px;font-weight:normal;letter-spacing:-0.429px;color:#383838;-webkit-text-stroke:0.3px #fefef5;">License.txt</div>
<svg style="left:751px;top:506px" width="36" height="50"><path d="M8.3 0.5 H32.8 Q33.8 0.5 33.8 1.5 V47.6 H0.5 V8.3 Z" fill="#fdfdf6" stroke="#c3c5bb" stroke-width="0.9"/><path d="M33.3 9.5 V39 H6 Z" fill="#eceee4"/><path d="M0.5 8.3 H7.6 Q8.3 8.3 8.3 7.6 V0.5 Z" fill="#d9dbd2"/><g fill="#878a80"><rect x="6" y="12.5" width="22" height="2"/><rect x="6" y="18.5" width="22" height="2"/><rect x="6" y="24.5" width="22" height="2"/><rect x="6" y="30.5" width="22" height="2"/></g><path d="M0.1 38.8 H15 V47.8 H1.3 Q0.1 47.8 0.1 46.6 Z" fill="#9a9d93"/><rect x="15" y="38.8" width="10" height="9" fill="#888b81"/><rect x="25" y="38.8" width="5" height="9" fill="#777a70"/><path d="M30 38.8 H34 V46.6 Q34 47.8 32.8 47.8 H30 Z" fill="#64675d"/></svg>
<div class="t" style="left:727.40px;top:559.00px;font-size:16.5px;font-weight:normal;letter-spacing:-0.198px;color:#383838;-webkit-text-stroke:0.3px #fefef5;">makefileMA</div>
<div class="t" style="left:737.30px;top:581.00px;font-size:16.5px;font-weight:normal;letter-spacing:-1.306px;color:#383838;-webkit-text-stroke:0.3px #fefef5;">CINTOSH</div>
<svg style="left:845px;top:506px" width="36" height="50"><path d="M8.3 0.5 H32.8 Q33.8 0.5 33.8 1.5 V47.6 H0.5 V8.3 Z" fill="#fdfdf6" stroke="#c3c5bb" stroke-width="0.9"/><path d="M33.3 9.5 V39 H6 Z" fill="#eceee4"/><path d="M0.5 8.3 H7.6 Q8.3 8.3 8.3 7.6 V0.5 Z" fill="#d9dbd2"/><g fill="#878a80"><rect x="6" y="12.5" width="22" height="2"/><rect x="6" y="18.5" width="22" height="2"/><rect x="6" y="24.5" width="22" height="2"/><rect x="6" y="30.5" width="22" height="2"/></g><path d="M0.1 38.8 H15 V47.8 H1.3 Q0.1 47.8 0.1 46.6 Z" fill="#9a9d93"/><rect x="15" y="38.8" width="10" height="9" fill="#888b81"/><rect x="25" y="38.8" width="5" height="9" fill="#777a70"/><path d="M30 38.8 H34 V46.6 Q34 47.8 32.8 47.8 H30 Z" fill="#64675d"/></svg>
<div class="t" style="left:819.80px;top:559.00px;font-size:16.5px;font-weight:normal;letter-spacing:-0.303px;color:#383838;-webkit-text-stroke:0.3px #fefef5;">makefileRas</div>
<div class="t" style="left:843.20px;top:581.00px;font-size:16.5px;font-weight:normal;letter-spacing:0.001px;color:#383838;-webkit-text-stroke:0.3px #fefef5;">pbian</div>
<svg style="left:939px;top:506px" width="36" height="50"><path d="M8.3 0.5 H32.8 Q33.8 0.5 33.8 1.5 V47.6 H0.5 V8.3 Z" fill="#fdfdf6" stroke="#c3c5bb" stroke-width="0.9"/><path d="M33.3 9.5 V39 H6 Z" fill="#eceee4"/><path d="M0.5 8.3 H7.6 Q8.3 8.3 8.3 7.6 V0.5 Z" fill="#d9dbd2"/><g fill="#878a80"><rect x="6" y="12.5" width="22" height="2"/><rect x="6" y="18.5" width="22" height="2"/><rect x="6" y="24.5" width="22" height="2"/><rect x="6" y="30.5" width="22" height="2"/></g><path d="M0.1 38.8 H15 V47.8 H1.3 Q0.1 47.8 0.1 46.6 Z" fill="#9a9d93"/><rect x="15" y="38.8" width="10" height="9" fill="#888b81"/><rect x="25" y="38.8" width="5" height="9" fill="#777a70"/><path d="M30 38.8 H34 V46.6 Q34 47.8 32.8 47.8 H30 Z" fill="#64675d"/></svg>
<div class="t" style="left:916.20px;top:559.00px;font-size:16.5px;font-weight:normal;letter-spacing:-0.021px;color:#383838;-webkit-text-stroke:0.3px #fefef5;">makefilesM</div>
<div class="t" style="left:939.00px;top:581.00px;font-size:16.5px;font-weight:normal;letter-spacing:-1.272px;color:#383838;-webkit-text-stroke:0.3px #fefef5;">SYS2</div>
<svg style="left:1033px;top:506px" width="36" height="50"><path d="M8.3 0.5 H32.8 Q33.8 0.5 33.8 1.5 V47.6 H0.5 V8.3 Z" fill="#fdfdf6" stroke="#c3c5bb" stroke-width="0.9"/><path d="M33.3 9.5 V39 H6 Z" fill="#eceee4"/><path d="M0.5 8.3 H7.6 Q8.3 8.3 8.3 7.6 V0.5 Z" fill="#d9dbd2"/><g fill="#878a80"><rect x="6" y="12.5" width="22" height="2"/><rect x="6" y="18.5" width="22" height="2"/><rect x="6" y="24.5" width="22" height="2"/><rect x="6" y="30.5" width="22" height="2"/></g><path d="M0.1 38.8 H15 V47.8 H1.3 Q0.1 47.8 0.1 46.6 Z" fill="#9a9d93"/><rect x="15" y="38.8" width="10" height="9" fill="#888b81"/><rect x="25" y="38.8" width="5" height="9" fill="#777a70"/><path d="M30 38.8 H34 V46.6 Q34 47.8 32.8 47.8 H30 Z" fill="#64675d"/></svg>
<div class="t" style="left:1010.40px;top:559.00px;font-size:16.5px;font-weight:normal;letter-spacing:-0.077px;color:#383838;-webkit-text-stroke:0.3px #fefef5;">makefilesM</div>
<div class="t" style="left:1016.20px;top:581.00px;font-size:16.5px;font-weight:normal;letter-spacing:-0.745px;color:#383838;-webkit-text-stroke:0.3px #fefef5;">SYS2-Glut</div>
<svg style="left:1127px;top:506px" width="36" height="50"><path d="M8.3 0.5 H32.8 Q33.8 0.5 33.8 1.5 V47.6 H0.5 V8.3 Z" fill="#fdfdf6" stroke="#c3c5bb" stroke-width="0.9"/><path d="M33.3 9.5 V39 H6 Z" fill="#eceee4"/><path d="M0.5 8.3 H7.6 Q8.3 8.3 8.3 7.6 V0.5 Z" fill="#d9dbd2"/><g fill="#878a80"><rect x="6" y="12.5" width="22" height="2"/><rect x="6" y="18.5" width="22" height="2"/><rect x="6" y="24.5" width="22" height="2"/><rect x="6" y="30.5" width="22" height="2"/></g><path d="M0.1 38.8 H15 V47.8 H1.3 Q0.1 47.8 0.1 46.6 Z" fill="#9a9d93"/><rect x="15" y="38.8" width="10" height="9" fill="#888b81"/><rect x="25" y="38.8" width="5" height="9" fill="#777a70"/><path d="M30 38.8 H34 V46.6 Q34 47.8 32.8 47.8 H30 Z" fill="#64675d"/></svg>
<div class="t" style="left:1105.20px;top:559.00px;font-size:16.5px;font-weight:normal;letter-spacing:-0.184px;color:#383838;-webkit-text-stroke:0.3px #fefef5;">makefileUb</div>
<div class="t" style="left:1129.80px;top:581.00px;font-size:16.5px;font-weight:normal;letter-spacing:-0.479px;color:#383838;-webkit-text-stroke:0.3px #fefef5;">unta</div>
<svg style="left:1221px;top:506px" width="36" height="50"><path d="M8.3 0.5 H32.8 Q33.8 0.5 33.8 1.5 V47.6 H0.5 V8.3 Z" fill="#fdfdf6" stroke="#c3c5bb" stroke-width="0.9"/><path d="M33.3 9.5 V39 H6 Z" fill="#eceee4"/><path d="M0.5 8.3 H7.6 Q8.3 8.3 8.3 7.6 V0.5 Z" fill="#d9dbd2"/><g fill="#878a80"><rect x="6" y="12.5" width="22" height="2"/><rect x="6" y="18.5" width="22" height="2"/><rect x="6" y="24.5" width="22" height="2"/><rect x="6" y="30.5" width="22" height="2"/></g><path d="M0.1 38.8 H15 V47.8 H1.3 Q0.1 47.8 0.1 46.6 Z" fill="#9a9d93"/><rect x="15" y="38.8" width="10" height="9" fill="#888b81"/><rect x="25" y="38.8" width="5" height="9" fill="#777a70"/><path d="M30 38.8 H34 V46.6 Q34 47.8 32.8 47.8 H30 Z" fill="#64675d"/></svg>
<div class="t" style="left:1198.00px;top:559.00px;font-size:16.5px;font-weight:normal;letter-spacing:-0.782px;color:#383838;-webkit-text-stroke:0.3px #fefef5;">README.m</div>
<div class="t" style="left:1236.50px;top:581.00px;font-size:16.5px;font-weight:normal;letter-spacing:0.000px;color:#383838;-webkit-text-stroke:0.3px #fefef5;">d</div>
<div class="t" style="left:330.50px;top:944.00px;font-size:16.5px;font-weight:normal;letter-spacing:-0.494px;color:#383838;-webkit-text-stroke:0.3px #edefe6;">"Digital" Ordner</div>
<div class="t" style="left:1249.70px;top:944.00px;font-size:16.5px;font-weight:normal;letter-spacing:-0.578px;color:#383838;-webkit-text-stroke:0.3px #edefe6;">Freier Speicherplatz: 18,0 GiB (Gesamt: 29,0 GiB)</div>
<div class="abs" style="left:329px;top:200px;width:270px;height:486px;background:#fdfdf6;border:1px solid #d6d7cf;border-left:none;border-top:none"></div>
<div class="t" style="left:371.50px;top:211.00px;font-size:16.5px;font-weight:normal;letter-spacing:-0.217px;color:#383838;-webkit-text-stroke:0.3px #fdfdf6;">Entwicklung</div>
<svg style="left:0;top:0" width="700" height="700"><path d="M588.3 215.2 L592 219 L588.3 222.8" fill="none" stroke="#1e2424" stroke-width="1.8"/></svg>
<div class="t" style="left:371.50px;top:248.00px;font-size:16.5px;font-weight:normal;letter-spacing:-0.111px;color:#383838;-webkit-text-stroke:0.3px #fdfdf6;">Bildung</div>
<svg style="left:0;top:0" width="700" height="700"><path d="M588.3 252.2 L592 256 L588.3 259.8" fill="none" stroke="#1e2424" stroke-width="1.8"/></svg>
<div class="t" style="left:371.50px;top:285.00px;font-size:16.5px;font-weight:normal;letter-spacing:-0.592px;color:#383838;-webkit-text-stroke:0.3px #fdfdf6;">Büro</div>
<svg style="left:0;top:0" width="700" height="700"><path d="M588.3 289.2 L592 293 L588.3 296.8" fill="none" stroke="#1e2424" stroke-width="1.8"/></svg>
<div class="t" style="left:371.50px;top:322.00px;font-size:16.5px;font-weight:normal;letter-spacing:-0.481px;color:#383838;-webkit-text-stroke:0.3px #fdfdf6;">Internet</div>
<svg style="left:0;top:0" width="700" height="700"><path d="M588.3 326.2 L592 330 L588.3 333.8" fill="none" stroke="#1e2424" stroke-width="1.8"/></svg>
<div class="t" style="left:371.50px;top:359.00px;font-size:16.5px;font-weight:normal;letter-spacing:-0.254px;color:#383838;-webkit-text-stroke:0.3px #fdfdf6;">Unterhaltungsmedien</div>
<svg style="left:0;top:0" width="700" height="700"><path d="M588.3 363.2 L592 367 L588.3 370.8" fill="none" stroke="#1e2424" stroke-width="1.8"/></svg>
<div class="t" style="left:372.50px;top:396.00px;font-size:16.5px;font-weight:normal;letter-spacing:-0.771px;color:#383838;-webkit-text-stroke:0.3px #fdfdf6;">Grafik</div>
<svg style="left:0;top:0" width="700" height="700"><path d="M588.3 400.2 L592 404 L588.3 407.8" fill="none" stroke="#1e2424" stroke-width="1.8"/></svg>
<div class="t" style="left:372.50px;top:433.00px;font-size:16.5px;font-weight:normal;letter-spacing:-0.638px;color:#383838;-webkit-text-stroke:0.3px #fdfdf6;">Spiele</div>
<svg style="left:0;top:0" width="700" height="700"><path d="M588.3 437.2 L592 441 L588.3 444.8" fill="none" stroke="#1e2424" stroke-width="1.8"/></svg>
<div class="t" style="left:372.50px;top:470.00px;font-size:16.5px;font-weight:normal;letter-spacing:-0.644px;color:#383838;-webkit-text-stroke:0.3px #fdfdf6;">Zubehör</div>
<svg style="left:0;top:0" width="700" height="700"><path d="M588.3 474.2 L592 478 L588.3 481.8" fill="none" stroke="#1e2424" stroke-width="1.8"/></svg>
<div class="t" style="left:371.50px;top:517.00px;font-size:16.5px;font-weight:normal;letter-spacing:-0.686px;color:#383838;-webkit-text-stroke:0.3px #fdfdf6;">Help</div>
<svg style="left:0;top:0" width="700" height="700"><path d="M588.3 521.2 L592 525 L588.3 528.8" fill="none" stroke="#1e2424" stroke-width="1.8"/></svg>
<div class="t" style="left:371.50px;top:564.00px;font-size:16.5px;font-weight:normal;letter-spacing:-0.333px;color:#383838;-webkit-text-stroke:0.3px #fdfdf6;">Einstellungen</div>
<svg style="left:0;top:0" width="700" height="700"><path d="M588.3 568.2 L592 572 L588.3 575.8" fill="none" stroke="#1e2424" stroke-width="1.8"/></svg>
<div class="t" style="left:372.50px;top:611.00px;font-size:16.5px;font-weight:normal;letter-spacing:-0.580px;color:#383838;-webkit-text-stroke:0.3px #fdfdf6;">Ausführen</div>
<div class="t" style="left:372.50px;top:658.00px;font-size:16.5px;font-weight:normal;letter-spacing:-0.617px;color:#383838;-webkit-text-stroke:0.3px #fdfdf6;">Abmelden</div>
<div class="abs" style="left:335px;top:500px;width:258px;height:1px;background:#e2e3da"></div>
<div class="abs" style="left:335px;top:547px;width:258px;height:1px;background:#e2e3da"></div>
<div class="abs" style="left:335px;top:594px;width:258px;height:1px;background:#e2e3da"></div>
<div class="abs" style="left:335px;top:641px;width:258px;height:1px;background:#e2e3da"></div>
<svg style="left:0;top:0" width="700" height="700"><circle cx="351" cy="218.7" r="14.8" fill="#52544e"/><path d="M340.6 229.1 A14.8 14.8 0 0 0 361.4 208.3 Z" fill="#474943"/><g fill="none" stroke="#8de82a" stroke-width="2.6" stroke-linejoin="round"><path d="M346.5 210 Q343.5 210 343.6 213.5 V216 Q343.6 218.7 341 218.7 Q343.6 218.7 343.6 221.4 V224 Q343.5 227.5 346.5 227.5"/><path d="M355.5 210 Q358.5 210 358.4 213.5 V216 Q358.4 218.7 361 218.7 Q358.4 218.7 358.4 221.4 V224 Q358.5 227.5 355.5 227.5"/></g><path d="M348.2 243 H353.6 V248 Q362.5 251 362.5 259.5 A11.8 11.8 0 0 1 338.9 259.5 Q338.9 251 348.2 248 Z" fill="#fdfdf6" stroke="#4a4a46" stroke-width="0.8"/><rect x="347" y="241.2" width="7.8" height="2" fill="#fdfdf6" stroke="#4a4a46" stroke-width="0.7"/><path d="M339.4 254 Q351 252 362 254 Q363.5 258 362.3 262 Q360 270.8 350.7 270.8 Q341.5 270.8 339.2 262 Q338.2 258 339.4 254Z" fill="#8eeedb" stroke="#3f7f74" stroke-width="0.6"/><path d="M362 254.5 Q363.5 258.5 362.3 262 Q360 270.5 350.7 270.5 Q345 270.5 342.5 268 Z" fill="#5cc0aa"/><circle cx="354" cy="266" r="1.6" fill="#c4f2e8"/><circle cx="357.6" cy="262.2" r="1.2" fill="#c4f2e8"/><path d="M337 283.5 L355.5 278.3 L357.5 281.5 L351 298.5 Z" fill="#e22a2a" stroke="#6a1414" stroke-width="0.7"/><path d="M355.5 278.5 L357.5 281.5 L351 298.5 L344.5 290.5 Z" fill="#b22222"/><path d="M339.5 290.5 L344 294.8 L342 296.5 Q338.5 295 339.5 290.5Z" fill="#f2e28a" stroke="#777" stroke-width="0.5"/><path d="M355.5 287 L361.5 292.5 L356.5 304.5" fill="none" stroke="#8e1a1a" stroke-width="1.9"/><circle cx="361.5" cy="292.5" r="2.9" fill="#e6e8e2" stroke="#666" stroke-width="0.6"/><rect x="347.2" y="304.5" width="16.3" height="3.4" fill="#a81e1e" stroke="#5a1010" stroke-width="0.6"/><circle cx="351" cy="330" r="15" fill="#78a6e4" stroke="#3c5a90" stroke-width="0.9"/><path d="M340.4 340.6 A15 15 0 0 0 361.6 319.4 Z" fill="#6a97d6"/><g fill="none" stroke="#eaf2ff" stroke-width="1"><line x1="351" y1="315" x2="351" y2="345"/><line x1="336" y1="330" x2="366" y2="330"/><line x1="338" y1="322.5" x2="364" y2="322.5"/><line x1="338" y1="337.5" x2="364" y2="337.5"/><ellipse cx="351" cy="330" rx="8.5" ry="15"/></g><path d="M337.5 356 H364.5 L362 381.5 H340 Z" fill="#f4f4ee" stroke="#666" stroke-width="0.7"/><g fill="#cc2a36"><path d="M341 356 H345 L345.5 381.5 H342.5 Z"/><path d="M349 356 H353 V381.5 H349 Z"/><path d="M357 356 H361 L359.5 381.5 H356.5 Z"/></g><g fill="#f6e6a6" stroke="#bfa660" stroke-width="0.5"><circle cx="341" cy="354.5" r="3.2"/><circle cx="347.5" cy="354" r="3.2"/><circle cx="354.5" cy="354" r="3.2"/><circle cx="361" cy="354.5" r="3.2"/></g><path d="M347 363.5 L357 369 L347 374.5 Z" fill="#fff" stroke="#888" stroke-width="0.6"/><rect x="342.5" y="389" width="17" height="9.5" rx="1" fill="#e0157c"/><path d="M343 394 Q345 397 347 394 Q349 397 351 394 Q353 397 355 394 Q357 397 359 394 V398.5 H343Z" fill="#f8d8e8"/><path d="M342.5 398.5 H359.5 V404 L354.5 409 V417 Q354.5 419 351 419 Q347.5 419 347.5 417 V409 L342.5 404 Z" fill="#b08a5a" stroke="#6a5030" stroke-width="0.7"/><rect x="349.5" y="412.5" width="3" height="3" fill="#f4f4ec"/><path d="M338 429 H342 V432.5 H345.5 V436 H356.5 V432.5 H360 V429 H364 V433 H360.5 V436.5 H364 V440 H367 V450 H363 V446.5 H360 V454 H356 V450 H346 V454 H342 V446.5 H339 V450 H335 V440 H338 V436.5 H341.5 V433 H338 Z" fill="#6acc2c" stroke="#3a7a18" stroke-width="0.7"/><rect x="343.5" y="440.5" width="3.5" height="3.5" fill="#eee"/><rect x="355" y="440.5" width="3.5" height="3.5" fill="#eee"/><path d="M335.5 470.5 L339 467 L347.5 480 L344 484 Z" fill="#f0f0ea" stroke="#666" stroke-width="0.7"/><path d="M366.5 475.5 L363 479 L354.5 466 L358 462 Z" fill="#f0f0ea" stroke="#666" stroke-width="0.7"/><rect x="344.5" y="462.5" width="12.5" height="30" rx="6" fill="#d43c5c" stroke="#8a2038" stroke-width="0.7"/><path d="M350.7 466 V471.5 M348 468.7 H353.4" stroke="#fff" stroke-width="1.3"/><rect x="349.2" y="485" width="3" height="3" fill="#f4d0d8"/><circle cx="351" cy="525" r="14.5" fill="#e07a3a" stroke="#7a4a2a" stroke-width="0.8"/><circle cx="351" cy="525" r="7.5" fill="#fdfdf6" stroke="#7a4a2a" stroke-width="0.8"/><g fill="#fdfdf6"><path d="M347 511 H355 V518 H347Z"/><path d="M347 532 H355 V539 H347Z"/><path d="M337 521 H344 V529 H337Z"/><path d="M358 521 H365 V529 H358Z"/></g><circle cx="351" cy="525" r="14.5" fill="none" stroke="#7a5a40" stroke-width="0.8"/><circle cx="351" cy="525" r="7.5" fill="none" stroke="#7a5a40" stroke-width="0.8"/><rect x="335.5" y="559" width="31" height="26" fill="#eceee6" stroke="#777" stroke-width="0.8"/><path d="M366.5 562 V584.5 H340 Z" fill="#dfe1d8"/><rect x="335.5" y="559" width="31" height="4.5" fill="#3a9ed0"/><g stroke="#6a6a66" stroke-width="0.9"><line x1="340" y1="569.5" x2="361" y2="569.5"/><line x1="340" y1="574.5" x2="361" y2="574.5"/><line x1="340" y1="579.5" x2="361" y2="579.5"/></g><g fill="#3a9ed0"><circle cx="346" cy="569.5" r="1.2"/><circle cx="356" cy="574.5" r="1.2"/><circle cx="350" cy="579.5" r="1.2"/></g><path d="M335 616 L366.5 603 L361.5 631 L351 624 Z" fill="#e8e9e2" stroke="#666" stroke-width="0.8"/><path d="M347 622 L351 624 L347 630 Z" fill="#c8c9c2" stroke="#666" stroke-width="0.6"/><path d="M347 622 L366.5 603" stroke="#888" stroke-width="0.6"/><rect x="336.3" y="651.5" width="29.2" height="29.2" rx="1" fill="#08e070" stroke="#0c3a22" stroke-width="0.9"/><path d="M365 652 V680.2 H336.8 Z" fill="#0cb574"/><circle cx="355.6" cy="656.3" r="2.4" fill="#111"/><path d="M344 664.5 L346.3 660.6 L353.8 660.6 L357 664.8 L360.8 665.3" fill="none" stroke="#111" stroke-width="2" stroke-linejoin="round" stroke-linecap="round"/><path d="M353.2 661 L350 668.2 L355.6 678.5 M350 668.2 L348 673.6 L341.8 673.6" fill="none" stroke="#111" stroke-width="2.3" stroke-linejoin="round" stroke-linecap="round"/></svg>
<div class="abs" style="left:9px;top:1039px;width:1920px;height:50px;background:#201d1d"></div>
<svg style="left:0;top:0" width="1937" height="1097"><path d="M28.7 1056.2 L37.3 1055 V1063.3 H28.7 Z M38.5 1054.8 L49 1053.5 V1063.3 H38.5 Z M28.7 1064.5 H37.3 V1072.8 L28.7 1071.6 Z M38.5 1064.5 H49 V1074.2 L38.5 1073 Z" fill="#fff"/></svg>
<div class="abs" style="left:69px;top:1039px;width:430px;height:50px;background:#f0f0f0"></div>
<svg style="left:0;top:0" width="1937" height="1097"><circle cx="97.3" cy="1062" r="6.2" fill="none" stroke="#1a1a1a" stroke-width="1.4"/><line x1="92.8" y1="1066.6" x2="84.5" y2="1074" stroke="#1a1a1a" stroke-width="1.6"/></svg>
<div class="t" style="left:119.40px;top:1056.00px;font-size:18.5px;font-weight:normal;letter-spacing:0.086px;color:#141414;-webkit-text-stroke:0.25px #f0f0f0;">Zur Suche Text hier eingeben</div>
<svg style="left:0;top:0" width="1937" height="1097"><circle cx="528.85" cy="1064" r="8.1" fill="none" stroke="#fff" stroke-width="2.9"/><g fill="none" stroke="#fff" stroke-width="1.2"><path d="M579.7 1054 V1056.9 H591.3 V1054 M579.7 1072.9 V1070 H591.3 V1072.9"/><rect x="579.7" y="1059.9" width="11.6" height="7.2"/><path d="M597.4 1054 V1057.5 M597.4 1064.2 V1072.9"/></g><rect x="596" y="1060.3" width="3" height="3.2" fill="#fff"/><defs><linearGradient id="edgeA" x1="0" y1="0" x2="1" y2="1"><stop offset="0" stop-color="#2aa6ec"/><stop offset="1" stop-color="#0b4f9c"/></linearGradient><linearGradient id="edgeB" x1="0" y1="0" x2="1" y2="0.6"><stop offset="0" stop-color="#2cb4f0"/><stop offset="1" stop-color="#6ced5e"/></linearGradient></defs><circle cx="653" cy="1063.9" r="15.2" fill="url(#edgeA)"/><path d="M646 1070 Q647 1076.5 655 1078.8 Q646 1079.5 641 1073.5 Q638.5 1069.5 638.5 1064 Q642 1068.5 646 1070Z" fill="#1781d8" opacity="0.7"/><path d="M653 1064 Q655 1069.6 662 1069.8 L670 1069.8" fill="none" stroke="#201d1d" stroke-width="2.2"/><path d="M638.2 1062.5 A15.2 15.2 0 0 1 668.2 1064.2 Q668 1068.7 662 1068.7 Q656.5 1068.7 655.8 1066 Q656.5 1061.5 652.5 1059.8 Q647.5 1057.8 642 1059.3 Q639 1060.5 638.2 1062.5 Z" fill="url(#edgeB)"/><circle cx="652.8" cy="1064" r="3.4" fill="#201d1d"/><path d="M665.8 1070.9 A1.3 1.3 0 0 1 665.8 1073.4 Q662 1078.5 655 1079.8 L671 1081 L671 1070.9 Z" fill="#201d1d"/><path d="M707.5 1058 V1052 Q707.5 1050.3 709.5 1050.3 H720 Q721.8 1050.3 721.8 1052 V1058" fill="none" stroke="#e6e6e6" stroke-width="2.6"/><rect x="699.5" y="1057" width="29.7" height="22" rx="1" fill="#f2f2f2"/><rect x="709" y="1063" width="5" height="5" fill="#f25022"/><rect x="715.2" y="1063" width="5" height="5" fill="#7fba00"/><rect x="709" y="1069.1" width="5" height="5" fill="#00a4ef"/><rect x="715.2" y="1069.1" width="5" height="5" fill="#ffb900"/><circle cx="776.6" cy="1064" r="13.9" fill="#db4437"/><path d="M776.6 1064 L764.6 1057 A13.9 13.9 0 0 0 770 1076.2 Z" fill="#0f9d58"/><path d="M776.6 1064 L770 1076.2 A13.9 13.9 0 0 0 790.5 1064 L788.6 1057 Z" fill="#ffcd40"/><path d="M776.6 1064 L776.6 1050.1 A13.9 13.9 0 0 1 789.7 1059 Z" fill="#db4437"/><circle cx="776.6" cy="1064" r="6.3" fill="#fff"/><circle cx="776.6" cy="1064" r="5" fill="#4285f4"/><path d="M825 1053 Q825 1052 826 1052 H836 L838 1054 H851.2 Q852.2 1054 852.2 1055 V1073 Q852.2 1074 851.2 1074 H826 Q825 1074 825 1073 Z" fill="#e3a50f"/><path d="M825 1056.5 H851.2 Q852.2 1056.5 852.2 1057.5 V1073 Q852.2 1074 851.2 1074 H826 Q825 1074 825 1073 Z" fill="#fdd15a"/><path d="M830.2 1075 V1065.5 Q830.2 1064.2 831.5 1064.2 H846.8 Q848 1064.2 848 1065.5 V1075 H843.2 V1068.2 H835 V1075 Z" fill="#3d9be6"/></svg>
<div class="abs" style="left:871px;top:1039px;width:61px;height:50px;background:#464444"></div>
<div class="abs" style="left:886px;top:1049px;width:30px;height:30px;background:#ef443b"></div>
<svg style="left:0;top:0" width="1937" height="1097"><polygon points="897.6,1056.9 904.4,1063.7 897.6,1070.5 890.8,1063.7" fill="#fff"/><polyline points="903.4,1058.2 908.8,1063.7 903.4,1069.2" fill="none" stroke="#fff" stroke-width="2.3"/><path d="M949.5 1049.5 H975.5 V1064 Q975.5 1074 962.5 1078.5 Q949.5 1074 949.5 1064 Z" fill="#fff" stroke="#1a6fd8" stroke-width="2.5"/><path d="M953.5 1070.5 L965.5 1058.5 M958 1058 H966.5 V1066.5" fill="none" stroke="#1a6fd8" stroke-width="2.3"/></svg>
<div class="abs" style="left:814px;top:1086px;width:51px;height:3px;background:#76b9ed"></div>
<div class="abs" style="left:871px;top:1086px;width:61px;height:3px;background:#76b9ed"></div>
<div class="abs" style="left:938px;top:1086px;width:51px;height:3px;background:#76b9ed"></div>
<svg style="left:0;top:0" width="1937" height="1097"><g fill="none" stroke="#eee" stroke-width="1.2"><path d="M1619 1067.8 L1627 1059.8 L1635 1067.8"/><path d="M1652.5 1059.3 H1665.8 V1069.8 H1650.2"/><path d="M1665.8 1062.6 H1667 V1066 H1665.8"/><path d="M1647.6 1057 V1059.6 M1651.4 1057 V1059.6 M1647 1059.6 H1652 V1061.2 Q1652 1063 1649.5 1063 Q1647 1063 1647 1061.2 Z M1649.5 1063 V1069.8" stroke-width="1"/><path d="M1680.5 1071.5 Q1681 1059 1694 1057.5"/><path d="M1684 1071.5 Q1684.5 1062.5 1694 1061"/><path d="M1687.5 1071.5 Q1688 1066 1694 1065"/><path d="M1707.3 1060.6 H1709.8 L1713.9 1057.2 V1070.8 L1709.8 1067.4 H1707.3 Z"/><path d="M1717.2 1061.3 Q1718.6 1063.9 1717.2 1066.5"/><path d="M1720.5 1058.5 Q1723.6 1063.9 1720.5 1069.3" stroke="#999"/><path d="M1723.5 1055.5 Q1728.5 1063.9 1723.5 1072.3" stroke="#888"/></g><rect x="1651.3" y="1060.8" width="8.7" height="7.6" fill="#fff"/><circle cx="1693.5" cy="1070.5" r="1.4" fill="#eee"/></svg>
<div class="t" style="left:1739.60px;top:1057.00px;font-size:15.3px;font-weight:normal;letter-spacing:-1.225px;color:#fff;-webkit-text-stroke:0.25px #201d1d;">DEU</div>
<div class="t" style="left:1802.00px;top:1045.00px;font-size:15.7px;font-weight:normal;letter-spacing:-1.233px;color:#fff;-webkit-text-stroke:0.25px #201d1d;">20:44</div>
<div class="t" style="left:1785.00px;top:1068.00px;font-size:15.7px;font-weight:normal;letter-spacing:-0.977px;color:#fff;-webkit-text-stroke:0.25px #201d1d;">14.05.2021</div>
<svg style="left:0;top:0" width="1937" height="1097"><path d="M1877.9 1053.8 H1898.2 V1071 H1886.5 L1888.5 1073.5 L1884.5 1071 H1877.9 Z" fill="#fff"/><g stroke="#201d1d" stroke-width="1.1"><line x1="1882" y1="1058.5" x2="1893.9" y2="1058.5"/><line x1="1882" y1="1062.3" x2="1893.9" y2="1062.3"/><line x1="1882" y1="1066.3" x2="1890" y2="1066.3"/></g><circle cx="1897.5" cy="1073.4" r="10.2" fill="#2b2a2a" stroke="#8a8a8a" stroke-width="0.9"/><path d="M1897.5 1073.4 V1063.6 A9.8 9.8 0 0 0 1887.7 1073.4 Z" fill="#6e6e6e"/><line x1="1923.5" y1="1039" x2="1923.5" y2="1089" stroke="#5a5a5a" stroke-width="1"/></svg>
<div class="t" style="left:1893.90px;top:1066.00px;font-size:15px;font-weight:bold;letter-spacing:0.000px;color:#fff;">3</div>
<svg style="left:0;top:0" width="1937" height="1097"><polygon points="1761.6,329.8 1761.6,348 1765.8,343.6 1770.3,352.9 1773.2,351.6 1768.8,342.8 1775,342.8" fill="#000" stroke="#fff" stroke-width="1.1" stroke-linejoin="miter"/></svg>
</body></html>
